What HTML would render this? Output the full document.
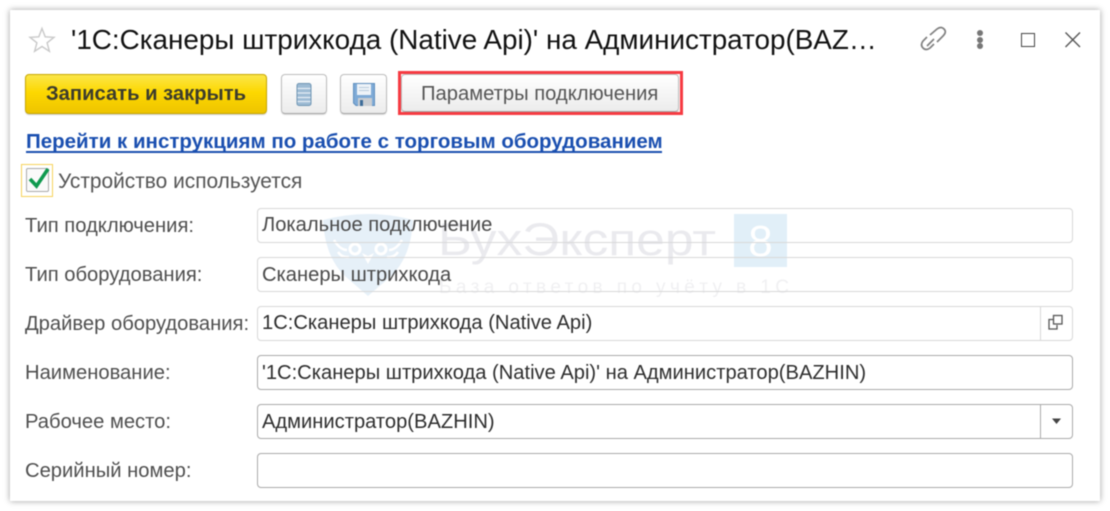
<!DOCTYPE html>
<html><head><meta charset="utf-8">
<style>
html,body{margin:0;padding:0;background:#fff;width:1110px;height:511px;overflow:hidden}
body{font-family:"Liberation Sans",sans-serif;position:relative}
#b{position:absolute;left:0;top:0;width:1110px;height:511px;filter:blur(.4px)}
#win{position:absolute;left:10px;top:10px;width:1090px;height:491px;background:#fff;box-shadow:0 0 6px rgba(0,0,0,.38)}
.t{position:absolute;white-space:nowrap;line-height:1}
.l{font-size:20.2px;color:#4f4f4f;left:25px}
.f{position:absolute;left:257px;width:814px;height:33px;border:1px solid #aaa;border-radius:4px;background:transparent}
.r{border-color:#d8d8d8}
.v{font-size:20.15px;color:#2e2e2e;left:262px}
.btn{position:absolute;border:1px solid #bdbdbd;border-bottom-color:#a5a5a5;border-radius:4px;background:linear-gradient(#fff,#ececec);box-shadow:0 1px 1px rgba(0,0,0,.15);box-sizing:border-box}
</style></head><body>
<div id="b">
<div id="win"></div>

<!-- watermark -->
<svg style="position:absolute;left:0;top:0" width="1110" height="511">
<path d="M323 220 Q368 208 413 220 Q411 258 390 277 L368 296 L346 277 Q325 258 323 220Z" fill="#e6f0f8"/>
<g fill="none" stroke="#fff" stroke-width="3"><circle cx="355" cy="249" r="5"/><circle cx="381" cy="249" r="5"/></g>
<path d="M334 240 Q340 250 347 250 M402 240 Q396 250 389 250 M338 252 Q342 258 349 257 M398 252 Q394 258 387 257" stroke="#fff" stroke-width="2.500" fill="none"/>
<path d="M362 253 L368 264 L374 253 L368 256Z" fill="#fff"/>
<rect x="734" y="214" width="53" height="53" fill="#e1eff8"/>
<text x="760.5" y="256" font-family="Liberation Sans" font-size="44" fill="#fff" text-anchor="middle">8</text>
<text x="438" y="255" font-family="Liberation Sans" font-size="45" fill="#eaeaee" textLength="278" lengthAdjust="spacingAndGlyphs">БухЭксперт</text>
<text x="439" y="293" font-family="Liberation Sans" font-size="19" fill="#f0f0f2" textLength="350">База ответов по учёту в 1С</text>
</svg>

<!-- title -->
<svg style="position:absolute;left:28px;top:26px" width="28" height="28" viewBox="0 0 28 28"><path d="M14 2.500 L17.200 10.800 L26 11.300 L19.100 16.800 L21.400 25.300 L14 20.500 L6.600 25.300 L8.900 16.800 L2 11.300 L10.800 10.800Z" fill="none" stroke="#c9c9c9" stroke-width="1.400"/></svg>
<div class="t" style="left:71px;top:26px;font-size:27.85px;color:#111" id="title">'1С:Сканеры штрихкода (Native Api)' на Администратор(BAZ…</div>

<!-- header icons -->
<svg style="position:absolute;left:910px;top:20px" width="50" height="40" viewBox="0 0 50 40" fill="none" stroke="#808080" stroke-width="1.700"><path d="M20 15 L27 9 Q31 6 34 9 Q37 12 33 16 L27 22"/><path d="M24 19 L17 26"/><path d="M17 17 L13 21 Q10 25 13 28 Q16 31 20 28 L24 24"/></svg>
<div style="position:absolute;left:977px;top:30px;width:6px;height:6px;border-radius:50%;background:#777"></div>
<div style="position:absolute;left:977px;top:37px;width:6px;height:6px;border-radius:50%;background:#777"></div>
<div style="position:absolute;left:977px;top:43px;width:6px;height:6px;border-radius:50%;background:#777"></div>
<div style="position:absolute;left:1021px;top:33px;width:12px;height:12px;border:1.500px solid #444"></div>
<svg style="position:absolute;left:1064px;top:31px" width="18" height="18"><path d="M1.500 1.500 L16 16 M16 1.500 L1.500 16" stroke="#555" stroke-width="1.400"/></svg>

<!-- toolbar -->
<div style="position:absolute;left:25px;top:74px;width:242px;height:40px;box-sizing:border-box;border:1px solid #c9a800;border-radius:4px;background:linear-gradient(#fbe64a,#fdd800 45%,#eec400);box-shadow:0 1px 1px rgba(0,0,0,.2)"></div>
<div class="t" style="left:46px;top:84px;font-size:20.2px;font-weight:bold;color:#3c3c2c" id="save">Записать и закрыть</div>

<div class="btn" style="left:281px;top:74px;width:46px;height:40px"></div>
<svg style="position:absolute;left:295px;top:82px" width="18" height="25" viewBox="0 0 18 25"><rect x="2" y="1.500" width="14" height="22" rx="2" fill="#9dbbd4" stroke="#6f95b3"/><path d="M2.500 6.500H15.500M2.500 11H15.500M2.500 15.500H15.500M2.500 19.500H15.500" stroke="#e6eef5" stroke-width="1.300"/></svg>

<div class="btn" style="left:340px;top:74px;width:47px;height:40px"></div>
<svg style="position:absolute;left:352px;top:82px" width="24" height="25" viewBox="0 0 24 25"><path d="M1.500 1.500H22.500V23.500H4L1.500 21Z" fill="#7eaad6" stroke="#5f8fbe"/><rect x="5" y="2" width="14" height="11" fill="#eef3f8"/><path d="M7 5.500H17M7 8.500H17" stroke="#b9cbdc" stroke-width="1"/><rect x="6" y="16" width="14" height="8" fill="#c9cdd2"/><rect x="8" y="18" width="3" height="6" fill="#3c6c99"/></svg>

<div class="btn" style="left:401px;top:74px;width:278px;height:38px"></div>
<div style="position:absolute;left:398px;top:71px;width:279px;height:38px;border:3px solid #f63b42;box-sizing:content-box"></div>
<div class="t" style="left:421px;top:84px;font-size:20.2px;color:#555" id="par">Параметры подключения</div>

<!-- link -->
<div class="t" style="left:26px;top:132px;font-size:20.5px;font-weight:bold;color:#1a4fb0" id="link">Перейти к инструкциям по работе с торговым оборудованием</div>
<div style="position:absolute;left:26px;top:151px;width:636px;height:2px;background:#1a4fb0"></div>

<!-- checkbox -->
<div style="position:absolute;left:21px;top:164px;width:32px;height:33px;box-sizing:border-box;border:1.500px solid #f7d35b"></div>
<div style="position:absolute;left:26px;top:168px;width:23px;height:24px;box-sizing:border-box;border:1.500px solid #aaa;border-radius:2px;background:#fafafa"></div>
<svg style="position:absolute;left:27px;top:165px" width="24" height="24"><path d="M3 14 L9.500 21 L21 4" fill="none" stroke="#0f9a4f" stroke-width="3.600"/></svg>
<div class="t" style="left:58px;top:172px;font-size:20.9px;color:#555" id="chk">Устройство используется</div>

<!-- rows -->
<div class="t l" style="top:216px">Тип подключения:</div>
<div class="f r" style="top:208px"></div>
<div class="t v" style="top:215px;color:#4a4a4a">Локальное подключение</div>

<div class="t l" style="top:265px">Тип оборудования:</div>
<div class="f r" style="top:257px"></div>
<div class="t v" style="top:265px;color:#4a4a4a">Сканеры штрихкода</div>

<div class="t l" style="top:314px">Драйвер оборудования:</div>
<div class="f r" style="top:306px"></div>
<div style="position:absolute;left:1040px;top:306px;width:1px;height:35px;background:#d8d8d8"></div>
<svg style="position:absolute;left:1047px;top:314px" width="18" height="18" fill="none" stroke="#555" stroke-width="1.300"><rect x="6.500" y="1.500" width="8.500" height="8.500"/><path d="M6 5.500H2V15H10V11"/></svg>
<div class="t v" style="top:313px">1С:Сканеры штрихкода (Native Api)</div>

<div class="t l" style="top:363px">Наименование:</div>
<div class="f" style="top:355px"></div>
<div class="t v" style="top:363px">'1С:Сканеры штрихкода (Native Api)' на Администратор(BAZHIN)</div>

<div class="t l" style="top:412px">Рабочее место:</div>
<div class="f" style="top:404px"></div>
<div style="position:absolute;left:1040px;top:404px;width:1px;height:35px;background:#aaa"></div>
<svg style="position:absolute;left:1051px;top:417px" width="11" height="8"><path d="M1 1.500H10L5.500 7Z" fill="#444"/></svg>
<div class="t v" style="top:412px">Администратор(BAZHIN)</div>

<div class="t l" style="top:461px">Серийный номер:</div>
<div class="f" style="top:453px"></div>
</div>
</body></html>
